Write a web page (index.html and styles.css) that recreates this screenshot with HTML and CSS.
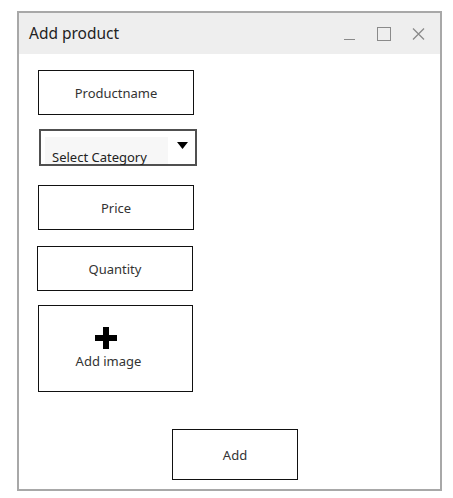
FILE: index.html
```html
<!DOCTYPE html>
<html>
<head>
<meta charset="utf-8">
<link rel="stylesheet" href="styles.css">
</head>
<body>
<div class="window">
  <div class="titlebar">
    <span class="title">Add product</span>
    <div class="controls">
      <span class="ctl min"></span>
      <span class="ctl max"></span>
      <svg class="ctl close" width="13" height="12" viewBox="0 0 13 12"><path d="M1 0.5 L12 11.5 M12 0.5 L1 11.5" stroke="#8a8a8a" stroke-width="1.3" fill="none"/></svg>
    </div>
  </div>
  <div class="content">
    <div class="field name">Productname</div>
    <div class="select">
      <div class="select-inner"><span class="select-text">Select Category</span></div>
      <svg class="arrow" width="11" height="7" viewBox="0 0 11 7"><path d="M0 0 H11 L5.5 7 Z" fill="#000"/></svg>
    </div>
    <div class="field price">Price</div>
    <div class="field qty">Quantity</div>
    <div class="field image">
      <svg class="plus" width="22" height="22" viewBox="0 0 22 22"><path d="M8 0 H14 V8 H22 V14 H14 V22 H8 V14 H0 V8 H8 Z" fill="#000"/></svg>
      <span>Add image</span>
    </div>
    <div class="field add">Add</div>
  </div>
</div>
</body>
</html>
```
FILE: styles.css
```css
html, body {
  margin: 0;
  padding: 0;
  background: #fff;
}
body {
  padding: 11px 0 0 17px;
  font-family: "Noto Sans", "Open Sans", sans-serif;
}
.window {
  box-sizing: border-box;
  width: 425px;
  height: 480px;
  border: 2px solid #a8a8a8;
  display: flex;
  flex-direction: column;
}
.titlebar {
  height: 41px;
  background: #eeeeee;
  display: flex;
  align-items: center;
  justify-content: space-between;
  padding: 0 15px 0 10px;
}
.title {
  font-size: 15.5px;
  color: #222;
  margin-top: -2px;
}
.controls {
  display: flex;
  align-items: center;
}
.ctl { display: block; }
.min {
  width: 11px;
  height: 1px;
  background: #8a8a8a;
  margin-top: 11px;
  margin-right: 22px;
}
.max {
  box-sizing: border-box;
  width: 14px;
  height: 14px;
  border: 1.3px solid #8a8a8a;
  margin-right: 21px;
}
.content {
  display: flex;
  flex-direction: column;
  align-items: flex-start;
  padding: 16px 0 0 19px;
}
.field {
  box-sizing: border-box;
  border: 1px solid #111;
  display: flex;
  align-items: center;
  justify-content: center;
  font-size: 13px;
  color: #333;
}
.name {
  width: 156px;
  height: 45px;
}
.select {
  box-sizing: border-box;
  width: 158px;
  height: 37px;
  margin-top: 14px;
  margin-left: 1px;
  border: 2px solid #505050;
  display: flex;
  align-items: flex-start;
  padding: 6px 0 0 4px;
}
.select-inner {
  width: 123px;
  height: 27px;
  background: #f7f7f7;
  position: relative;
}
.select-text {
  position: absolute;
  left: 7px;
  top: 12px;
  font-size: 13px;
  color: #222;
  white-space: nowrap;
  line-height: 17px;
}
.arrow {
  margin: 5px 0 0 9px;
}
.price {
  width: 156px;
  height: 45px;
  margin-top: 19px;
}
.qty {
  width: 156px;
  height: 45px;
  margin-top: 16px;
  margin-left: -1px;
}
.image {
  width: 155px;
  height: 87px;
  margin-top: 14px;
  flex-direction: column;
  padding: 0 14px 0 0;
}
.plus {
  margin-left: -5px;
  margin-bottom: 3px;
}
.add {
  width: 126px;
  height: 51px;
  margin-top: 37px;
  margin-left: 134px;
}
```
